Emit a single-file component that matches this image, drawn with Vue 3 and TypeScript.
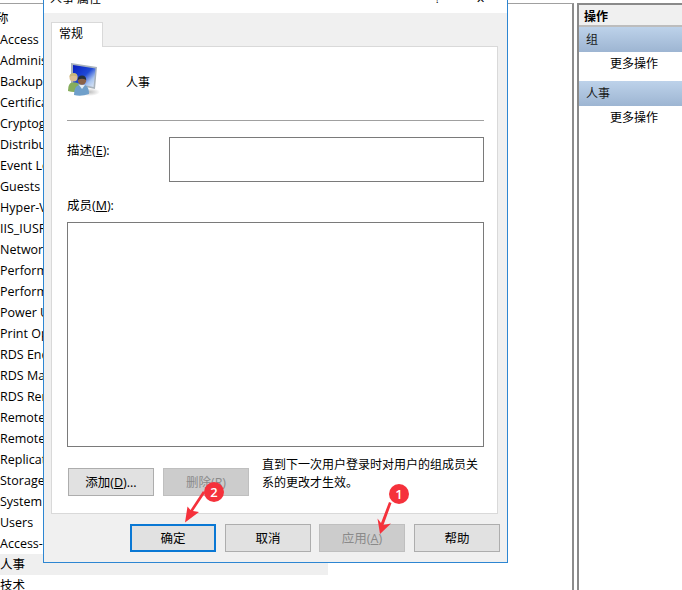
<script setup lang="ts">
const groups: string[] = [
  '称', 'Access', 'Administrators', 'Backup Operators', 'Certificate', 'Cryptographic', 'Distributed', 'Event Log', 'Guests',
  'Hyper-V', 'IIS_IUSRS', 'Network', 'Performance', 'Performance', 'Power Users', 'Print Operators', 'RDS Endpoint',
  'RDS Management', 'RDS Remote', 'Remote Desktop', 'Remote Management', 'Replicator', 'Storage', 'System', 'Users',
  'Access-Control', '人事', '技术'
]
</script>

<template>
  <div class="page">
    <section class="list">
      <div
        v-for="(g, i) in groups"
        :key="i"
        class="row"
        :class="{ selected: g === '人事', clipped: i === 0 }"
      >{{ g }}</div>
    </section>

    <aside class="actions">
      <div class="actions-head">操作</div>
      <div class="band">组</div>
      <div class="more">更多操作</div>
      <div class="band second">人事</div>
      <div class="more">更多操作</div>
    </aside>

    <div class="dialog">
      <div class="titlebar">
        <span>人事 属性</span>
        <span class="controls"><i class="help">?</i><i class="close">✕</i></span>
      </div>
      <div class="dialog-body">
        <div class="tab">常规</div>
        <div class="panel">
          <div class="head">
            <svg class="icon" width="32" height="36" viewBox="0 0 32 36">
              <defs>
                <linearGradient id="scr" x1="0" y1="0" x2="1" y2="1">
                  <stop offset="0" stop-color="#0a1fc0" />
                  <stop offset="0.5" stop-color="#1f49d6" />
                  <stop offset="0.75" stop-color="#a9c4ee" />
                  <stop offset="1" stop-color="#e6eef8" />
                </linearGradient>
                <radialGradient id="shade" cx="0.5" cy="0.5" r="0.5">
                  <stop offset="0" stop-color="#bdbdbd" />
                  <stop offset="1" stop-color="#ffffff" />
                </radialGradient>
              </defs>
              <ellipse cx="21" cy="29" rx="11" ry="4" fill="url(#shade)" />
              <path d="M3 0 L29 4 L27 26 L3 21 Z" fill="#a9b3bc" />
              <path d="M5 2 L27.500 5.500 L25.500 24 L5 19.500 Z" fill="url(#scr)" />
              <path d="M0 28 Q0 20 4 19.500 L8 19.500 Q12 21 12 28 Q6 30 0 28 Z" fill="#86ad5c" />
              <circle cx="5.500" cy="14.500" r="4" fill="#dcbf94" />
              <path d="M1.500 14 Q1.500 10 5.500 10 Q9.500 10 9.500 14 Q5.500 11.500 1.500 14 Z" fill="#c8b878" />
              <path d="M6 32 Q6 23 11 22 L17 22 Q21 23.500 21 31 Q13 34 6 32 Z" fill="#6f9fca" />
              <path d="M11 22 L14 26 L17 22 Z" fill="#e6eef5" />
              <circle cx="14" cy="17.500" r="4.200" fill="#8a6248" />
              <path d="M9.800 17 Q9.800 12.500 14 12.500 Q18.200 12.500 18.200 17 Q14 14.500 9.800 17 Z" fill="#25303a" />
            </svg>
            <span class="name">人事</span>
          </div>
          <div class="rule"></div>
          <div class="desc">
            <span class="lbl">描述(<u>E</u>):</span>
            <div class="box desc-box"></div>
          </div>
          <div class="lbl members">成员(<u>M</u>):</div>
          <div class="box member-box"></div>
          <div class="member-foot">
            <button class="btn">添加(<u>D</u>)...</button>
            <button class="btn off">删除(<u>R</u>)</button>
            <p class="note">直到下一次用户登录时对用户的组成员关系的更改才生效。</p>
          </div>
        </div>
        <div class="foot">
          <button class="btn primary">确定</button>
          <button class="btn">取消</button>
          <button class="btn off">应用(<u>A</u>)</button>
          <button class="btn">帮助</button>
        </div>
      </div>
    </div>

    <svg class="arrows" width="682" height="590" viewBox="0 0 682 590">
      <path d="M389 502 L391.500 503 L383.500 525 L391 523.500 L380 534 L377.500 518.500 L381 523 Z" fill="#f5313b" />
      <path d="M203 491 L205 493 L193 511 L199 512 L185 522.500 L187.500 506.500 L190.500 510 Z" fill="#f5313b" />
    </svg>
    <span class="badge b1">1</span>
    <span class="badge b2">2</span>
  </div>
</template>

<style>
html, body { margin: 0; overflow: hidden; background: #fff; }
</style>

<style scoped>
.page {
  position: relative;
  width: 682px;
  height: 590px;
  overflow: hidden;
  display: flex;
  background: #fff;
  color: #000;
  font: 12.5px "Open Sans", "Noto Sans CJK SC", sans-serif;
}
.list {
  width: 574px;
  height: 587px;
  margin-top: 3px;
  padding-top: 4px;
  box-sizing: border-box;
  border-top: 1px solid #a0a0a0;
  border-right: 2px solid #8c8c8c;
  flex: none;
}
.row {
  height: 21px;
  line-height: 21px;
  width: 328px;
  white-space: nowrap;
  overflow: hidden;
}
.row.selected { background: #efefef; }
.row.clipped { text-indent: -4px; }
.actions {
  margin: 3px 0 0 3px;
  flex: 1;
  border-left: 2px solid #8a8a8a;
  border-top: 2px solid #8a8a8a;
  font-size: 12px;
}
.actions-head {
  height: 20px;
  line-height: 23px;
  padding-left: 5px;
  background: #f0f0f0;
  border-bottom: 2px solid #bdbdbd;
  font-weight: 700;
}
.band {
  height: 25px;
  line-height: 26px;
  padding-left: 7px;
  background: linear-gradient(#bdd2ea, #9db5d2);
  color: #1a1a1a;
}
.more {
  height: 29px;
  line-height: 24px;
  padding-left: 31px;
}
.dialog {
  position: absolute;
  left: 43px;
  top: -16px;
  width: 465px;
  height: 579px;
  box-sizing: border-box;
  border: 1px solid #2d86d2;
  background: #f0f0f0;
}
.titlebar {
  height: 28px;
  box-sizing: border-box;
  padding: 0 22px 2px 6px;
  background: #fff;
  display: flex;
  justify-content: space-between;
  align-items: center;
  font-size: 12px;
}
.controls { display: flex; gap: 36px; }
.controls i { font-style: normal; font-size: 11px; }
.dialog-body {
  padding: 9px 7px 0;
}
.tab {
  width: 52px;
  height: 25px;
  line-height: 22px;
  box-sizing: border-box;
  padding-left: 7px;
  background: #fff;
  border: 1px solid #d9d9d9;
  border-bottom: none;
  position: relative;
  z-index: 1;
  margin-bottom: -1px;
  font-size: 12px;
}
.panel {
  width: 447px;
  height: 468px;
  box-sizing: border-box;
  background: #fff;
  border: 1px solid #d9d9d9;
  padding: 16px 13px 0 15px;
}
.head {
  height: 57px;
  display: flex;
  align-items: flex-start;
}
.icon { flex: none; margin-left: 1px; }
.name { margin: 10px 0 0 26px; font-size: 12px; }
.rule { height: 1px; background: #a0a0a0; }
.desc {
  display: flex;
  margin-top: 16px;
}
.lbl { line-height: 28px; }
.desc .lbl { width: 102px; flex: none; }
.box {
  border: 1px solid #7a7a7a;
  box-sizing: border-box;
  background: #fff;
}
.desc-box { width: 315px; height: 45px; }
.members { margin-top: 10px; height: 28px; margin-bottom: 2px; }
.member-box { width: 417px; height: 225px; }
.member-foot {
  display: flex;
  margin-top: 21px;
  padding-left: 1px;
}
.member-foot .btn:nth-child(2) { margin-left: 9px; }
.note {
  margin: -12px 0 0 13px;
  width: 222px;
  line-height: 18px;
  font-size: 12px;
}
.btn {
  width: 86px;
  height: 28px;
  padding: 0 0 1px;
  box-sizing: border-box;
  background: #e1e1e1;
  border: 1px solid #adadad;
  font: inherit;
  color: #000;
}
.btn.off { background: #cccccc; color: #8a8a8a; border-color: #bfbfbf; }
.btn.primary { border: 2px solid #0a78d4; }
.foot {
  display: flex;
  justify-content: flex-end;
  gap: 9px;
  margin-top: 10px;
  width: 449px;
}
.foot .btn:nth-child(3) { margin-left: -1px; }
.arrows { position: absolute; left: 0; top: 0; pointer-events: none; }
.badge {
  position: absolute;
  width: 20px;
  height: 20px;
  border-radius: 50%;
  background: #f5313b;
  color: #fff;
  font-size: 13px;
  font-weight: 600;
  line-height: 20px;
  text-align: center;
}
.b1 { left: 389px; top: 484px; }
.b2 { left: 204px; top: 482px; }
</style>
